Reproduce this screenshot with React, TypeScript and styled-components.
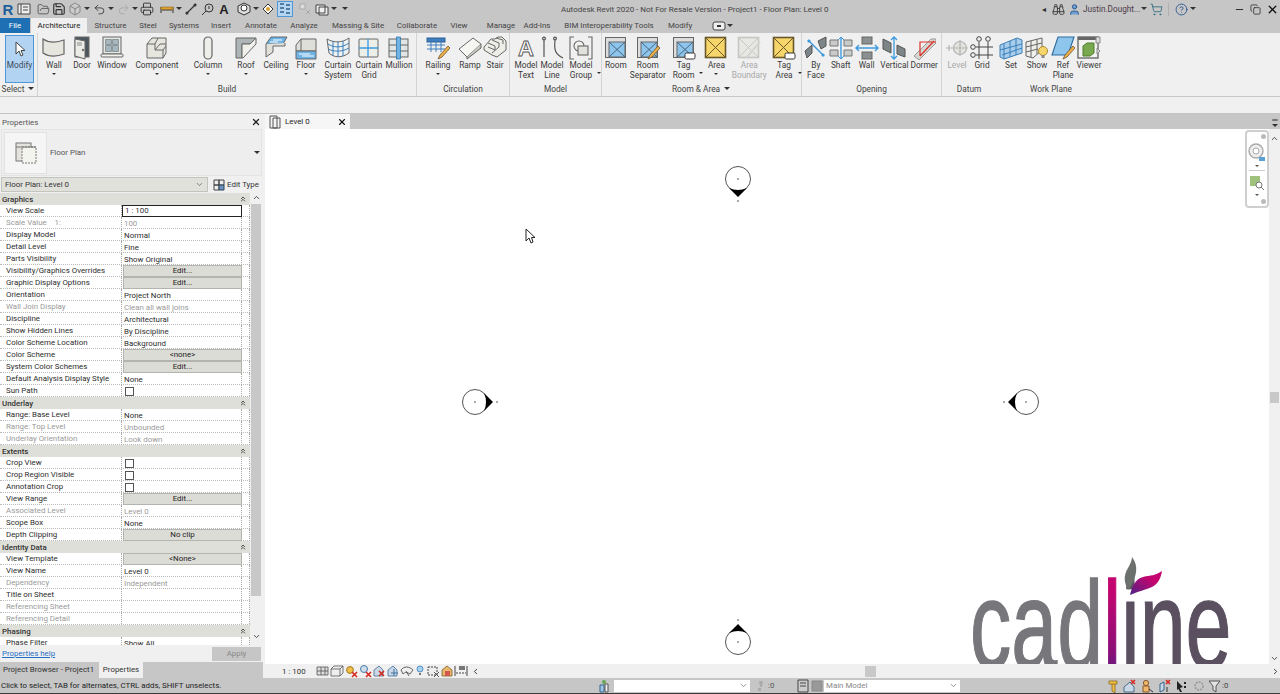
import { ReactNode } from 'react';
import { styled, createGlobalStyle } from 'styled-components';
import {
  Binoculars,
  ChevronLeft,
  ChevronRight,
  ChevronUp,
  ChevronDown,
  ChevronsUp,
  CircleHelp,
  Copy,
  FolderOpen,
  Minus,
  Printer,
  Redo2,
  Save,
  ShoppingCart,
  Undo2,
  User,
  X,
} from 'lucide-react';

const GlobalStyle = createGlobalStyle`
  html, body {
    margin: 0;
    padding: 0;
    background: #fff;
  }
  * {
    box-sizing: border-box;
  }
`;

const LINE = '#666';
const LIGHT = '#e6e6df';
const BLUE = '#6db3e6';
const YELLOW = '#f6d56b';

const Pencil = () => (
  <g>
    <path d="M22 10L14 19L12 23L16 21L24 12Z" fill="#f0b04a" stroke="#6a5430" strokeWidth=".8" />
  </g>
);

const Tag = () => <rect x="13" y="17" width="10" height="6" rx="1.5" fill="#fff" stroke="#333" />;

const RoomBase = () => (
  <g stroke={LINE}>
    <rect x="1.5" y="1.5" width="20" height="20" fill="#ddd" />
    <rect x="5" y="6" width="16" height="15" fill="#8ec5ec" />
    <path d="M5 6L21 21M21 6L5 21" fill="none" stroke="#45657d" />
  </g>
);

const AreaBase = ({ fill = YELLOW, stroke = '#6a5a2a' }: { fill?: string; stroke?: string }) => (
  <g>
    <rect x="1.5" y="1.5" width="20" height="20" fill={fill} stroke={stroke} strokeWidth="1.6" />
    <path d="M2 2L21 21M21 2L2 21" fill="none" stroke={stroke} />
  </g>
);

const icons: Record<string, ReactNode> = {
  wall: <path d="M1 3C7 7 14 7 22 4V18C14 21 7 21 1 17Z" fill={LIGHT} stroke={LINE} strokeWidth="1.2" />,
  door: (
    <g stroke={LINE}>
      <rect x="5" y="1" width="14" height="20" fill="#4c565c" />
      <path d="M5 3L15 5V23L5 20Z" fill="#ecece6" />
      <rect x="7" y="6" width="5" height="4" fill="#bbb" stroke="none" />
      <circle cx="13" cy="14" r=".8" fill="#333" />
    </g>
  ),
  window: (
    <g stroke={LINE}>
      <rect x="3" y="1" width="18" height="17" fill="#e8e8e2" />
      <path d="M5.5 3.5h6v5h-6zM12.5 3.5h6v5h-6zM5.5 9.5h6v6h-6zM12.5 9.5h6v6h-6z" fill="#a7b6bd" stroke="#8a969b" />
      <rect x="1" y="18" width="22" height="3" rx="1" fill="#f2f2ee" />
    </g>
  ),
  component: (
    <g fill={LIGHT} stroke={LINE}>
      <path d="M2 8L7 2H21V17L18 22H2Z" />
      <path d="M2 8H10V14H18V22M10 8L13 2M10 14L15 8H21M18 14L21 10" fill="none" />
    </g>
  ),
  column: <rect x="8" y="1" width="8" height="22" rx="4" fill="#eeeee8" stroke={LINE} strokeWidth="1.2" />,
  roof: (
    <g stroke={LINE}>
      <path d="M2 2H22L16 8H8V22H2Z" fill="#aeb5b7" />
      <path d="M8 8H16L22 2V8L9 22H8Z" fill="#f0f0ea" />
    </g>
  ),
  ceiling: (
    <g stroke={LINE}>
      <path d="M7 1H23L19 8H2Z" fill={BLUE} />
      <path d="M2 8V21L9 16V10H21V7" fill="#e0e0d8" />
      <path d="M9 4H18M6 6H14" stroke="#fff" />
    </g>
  ),
  floor: (
    <g stroke={LINE}>
      <path d="M7 3H22V15H2V9Z" fill="#dedfd8" />
      <path d="M7 3V15" fill="none" />
      <path d="M2 15H22V23H2Z" fill={BLUE} />
      <path d="M5 18H16M8 20H20" stroke="#fff" />
    </g>
  ),
  curtainSystem: (
    <g fill="#eef1f2" stroke="#3a7fb8">
      <path d="M1 3C8 7 16 7 23 2V17C16 22 8 22 3 17Z" stroke={LINE} />
      <path d="M7 5V20M12 6V21M17 5V20M2 8C8 12 16 12 23 7M2 13C8 16 16 16 23 12" fill="none" />
    </g>
  ),
  curtainGrid: (
    <g>
      <rect x="2" y="3" width="19" height="18" rx="1" fill="#eceee8" stroke={LINE} />
      <path d="M11 3V21M2 12H21" stroke="#3d9ae0" strokeWidth="1.3" />
    </g>
  ),
  mullion: (
    <g>
      <rect x="2" y="3" width="19" height="18" fill="#dfe4e4" stroke={LINE} />
      <path d="M2 9H21M2 15H21" stroke={LINE} />
      <rect x="9.5" y="1" width="4" height="22" fill={BLUE} stroke="#2a6f9f" strokeWidth=".7" />
    </g>
  ),
  railing: (
    <g>
      <rect x="1" y="2" width="18" height="4" fill="#3f7fc0" stroke="#2d5f94" />
      <path d="M1 9H19M1 13H19M5 6V16M10 6V16M15 6V16" stroke="#3f7fc0" />
      <Pencil />
    </g>
  ),
  ramp: (
    <g stroke={LINE}>
      <path d="M1 13L15 2L23 8L9 21Z" fill="#f6f6f2" />
      <path d="M23 8L23 12L9 23V21" fill="#c7c7c0" />
    </g>
  ),
  stair: (
    <g stroke={LINE} fill="#eeeee8">
      <path d="M1 11L8 3H12L15 1H19L23 5V14L14 21L9 19L1 14Z" />
      <path d="M5 7L12 10M9 4L16 7M13 2L20 4M12 10V14M16 7V11M20 4V8M12 14L5 11M16 11L9 17" fill="none" />
    </g>
  ),
  modelText: (
    <text x="12" y="20" textAnchor="middle" fontFamily="'Liberation Sans', sans-serif" fontSize="22" fontWeight="700" fill="#fff" stroke="#555" strokeWidth=".9">
      A
    </text>
  ),
  modelLine: (
    <g fill="none" stroke="#555" strokeWidth="1.2">
      <path d="M4 4V21M15 4C14 14 15 18 23 22" />
      <circle cx="4" cy="2.5" r="1.4" />
      <circle cx="15" cy="2.5" r="1.4" />
    </g>
  ),
  modelGroup: (
    <g fill="none" stroke="#666" strokeWidth="1.1">
      <path d="M5 1H1V23H5M19 1H23V23H19" />
      <circle cx="10" cy="10" r="5" fill="#f2f2f2" />
      <rect x="9" y="10" width="10" height="9" fill="#e2e2dc" />
    </g>
  ),
  room: <RoomBase />,
  roomSeparator: (
    <g>
      <RoomBase />
      <Pencil />
    </g>
  ),
  tagRoom: (
    <g>
      <RoomBase />
      <Tag />
    </g>
  ),
  area: <AreaBase />,
  areaBoundary: (
    <g opacity=".75">
      <AreaBase fill="#e4e4e0" stroke="#b8b8b4" />
      <path d="M10 21L23 6" stroke="#ccc" strokeWidth="2" />
    </g>
  ),
  tagArea: (
    <g>
      <AreaBase />
      <Tag />
    </g>
  ),
  byFace: (
    <g>
      <path d="M1 15L8 9V17L3 22ZM14 5L22 1V10L17 13Z" fill="#7c8688" stroke="#555" />
      <path d="M4 4L20 20" stroke="#3d9ae0" strokeWidth="1.4" />
      <circle cx="5" cy="5" r="1.6" fill="#3d9ae0" />
      <circle cx="19" cy="19" r="1.6" fill="#3d9ae0" />
    </g>
  ),
  shaft: (
    <g>
      <path d="M1 4h8v6H1zM15 4h8v6h-8zM1 14h8v6H1zM15 14h8v6h-8z" fill="#c9cbca" stroke="#777" />
      <path d="M12 1V23" stroke="#3d9ae0" strokeWidth="1.4" />
      <path d="M9 4L12 1L15 4M9 20L12 23L15 20" fill="none" stroke="#3d9ae0" />
    </g>
  ),
  wallOpening: (
    <g>
      <rect x="7" y="1" width="10" height="7" fill="#8c9090" stroke="#666" />
      <rect x="7" y="16" width="10" height="7" fill="#8c9090" stroke="#666" />
      <path d="M1 12H23M4 9L1 12L4 15M20 9L23 12L20 15" fill="none" stroke="#3d9ae0" strokeWidth="1.4" />
    </g>
  ),
  verticalOpening: (
    <g>
      <path d="M1 3L9 7V17L1 13ZM15 9L23 13V21L15 18Z" fill="#7c8688" stroke="#555" />
      <path d="M12 1V23M9 4L12 1L15 4M9 20L12 23L15 20" fill="none" stroke="#3d9ae0" strokeWidth="1.3" />
    </g>
  ),
  dormer: (
    <g>
      <path d="M2 20L19 3H24V7L7 24Z" fill="#d7d7d2" stroke="#999" />
      <path d="M8 20L8 6H24M8 20L22 5" fill="none" stroke="#d8322a" strokeWidth="1.2" />
    </g>
  ),
  level: (
    <g fill="none" stroke="#b5b5b2" strokeWidth="1.2">
      <path d="M1 12H7M4 9V15" />
      <circle cx="15" cy="12" r="6.5" fill="#e2e2de" />
      <path d="M15 4V20M7 12H23" />
    </g>
  ),
  grid: (
    <g fill="none" stroke="#444">
      <circle cx="9" cy="3" r="2.3" />
      <circle cx="18" cy="3" r="2.3" />
      <circle cx="3" cy="11" r="2.3" />
      <circle cx="3" cy="19" r="2.3" />
      <path d="M9 6V23M18 6V23M6 11H23M6 19H23" />
    </g>
  ),
  workSet: (
    <g stroke="#3a7fb8" fill="#a6cdec">
      <path d="M1 9L18 2L23 4V17L5 23L1 21Z" />
      <path d="M5 8V23M11 5V21M17 3V19M1 14L23 8M3 19L23 12" fill="none" />
    </g>
  ),
  workShow: (
    <g>
      <path d="M1 6L17 2V14L8 22L1 20Z" fill="#eeeeea" stroke="#666" />
      <path d="M6 5V21M12 3V18M1 11L17 7M1 16L13 13" fill="none" stroke="#666" />
      <circle cx="18" cy="15" r="4.5" fill="#f6d56b" stroke="#a98a2c" />
      <rect x="16.5" y="19" width="3" height="3" fill="#888" />
    </g>
  ),
  refPlane: (
    <g>
      <path d="M7 1H23L17 19H1Z" fill="#8ec5ec" stroke="#2d6a9c" strokeWidth="1.1" />
      <Pencil />
    </g>
  ),
  viewer: (
    <g>
      <rect x="1" y="1" width="20" height="21" fill="#f2f2f0" stroke="#555" strokeWidth="1.2" />
      <rect x="1" y="1" width="20" height="3" fill="#666" />
      <path d="M6 10L10 7H17V17L13 20H6Z" fill="#78a94f" stroke="#4f7d30" />
      <path d="M19 1h4v6h-4zM20 12l3 3-3 3z" fill="#ddd" stroke="#888" />
    </g>
  ),
};

type ToolData = { icon: string; lines: string[]; w: number; caret?: 'below' | 'side'; off?: boolean };
type PanelData = { title: string; w: number; divider?: boolean; menu?: boolean; tools: ToolData[] };

const panels: PanelData[] = [
  {
    title: 'Build',
    w: 379,
    divider: true,
    tools: [
      { icon: 'wall', lines: ['Wall'], w: 32, caret: 'below' },
      { icon: 'door', lines: ['Door'], w: 24 },
      { icon: 'window', lines: ['Window'], w: 36 },
      { icon: 'component', lines: ['Component'], w: 54, caret: 'below' },
      { icon: 'column', lines: ['Column'], w: 48, caret: 'below' },
      { icon: 'roof', lines: ['Roof'], w: 28, caret: 'below' },
      { icon: 'ceiling', lines: ['Ceiling'], w: 32 },
      { icon: 'floor', lines: ['Floor'], w: 28, caret: 'below' },
      { icon: 'curtainSystem', lines: ['Curtain', 'System'], w: 36 },
      { icon: 'curtainGrid', lines: ['Curtain', 'Grid'], w: 26 },
      { icon: 'mullion', lines: ['Mullion'], w: 34 },
    ],
  },
  {
    title: 'Circulation',
    w: 93,
    divider: true,
    tools: [
      { icon: 'railing', lines: ['Railing'], w: 42, caret: 'below' },
      { icon: 'ramp', lines: ['Ramp'], w: 22 },
      { icon: 'stair', lines: ['Stair'], w: 28 },
    ],
  },
  {
    title: 'Model',
    w: 92,
    divider: true,
    tools: [
      { icon: 'modelText', lines: ['Model', 'Text'], w: 32 },
      { icon: 'modelLine', lines: ['Model', 'Line'], w: 20 },
      { icon: 'modelGroup', lines: ['Model', 'Group'], w: 38, caret: 'side' },
    ],
  },
  {
    title: 'Room & Area',
    w: 200,
    divider: true,
    menu: true,
    tools: [
      { icon: 'room', lines: ['Room'], w: 28 },
      { icon: 'roomSeparator', lines: ['Room', 'Separator'], w: 36 },
      { icon: 'tagRoom', lines: ['Tag', 'Room'], w: 36, caret: 'side' },
      { icon: 'area', lines: ['Area'], w: 30, caret: 'below' },
      { icon: 'areaBoundary', lines: ['Area', 'Boundary'], w: 36, off: true },
      { icon: 'tagArea', lines: ['Tag', 'Area'], w: 34, caret: 'side' },
    ],
  },
  {
    title: 'Opening',
    w: 140,
    divider: true,
    tools: [
      { icon: 'byFace', lines: ['By', 'Face'], w: 28 },
      { icon: 'shaft', lines: ['Shaft'], w: 22 },
      { icon: 'wallOpening', lines: ['Wall'], w: 30 },
      { icon: 'verticalOpening', lines: ['Vertical'], w: 26 },
      { icon: 'dormer', lines: ['Dormer'], w: 34 },
    ],
  },
  {
    title: 'Datum',
    w: 54,
    tools: [
      { icon: 'level', lines: ['Level'], w: 30, off: true },
      { icon: 'grid', lines: ['Grid'], w: 20 },
    ],
  },
  {
    title: 'Work Plane',
    w: 110,
    tools: [
      { icon: 'workSet', lines: ['Set'], w: 30 },
      { icon: 'workShow', lines: ['Show'], w: 22 },
      { icon: 'refPlane', lines: ['Ref', 'Plane'], w: 30 },
      { icon: 'viewer', lines: ['Viewer'], w: 22 },
    ],
  },
];

const tabs = [
  { label: 'Structure', w: 47 },
  { label: 'Steel', w: 28 },
  { label: 'Systems', w: 44 },
  { label: 'Insert', w: 30 },
  { label: 'Annotate', w: 50 },
  { label: 'Analyze', w: 36 },
  { label: 'Massing & Site', w: 72 },
  { label: 'Collaborate', w: 46 },
  { label: 'View', w: 38 },
  { label: 'Manage', w: 46 },
  { label: 'Add-Ins', w: 26 },
  { label: 'BIM Interoperability Tools', w: 118 },
  { label: 'Modify', w: 24 },
];

type Row =
  | { head: string }
  | { name: string; value?: string; kind?: 'input' | 'button' | 'check'; off?: boolean };

const rows: Row[] = [
  { head: 'Graphics' },
  { name: 'View Scale', value: '1 : 100', kind: 'input' },
  { name: 'Scale Value    1:', value: '100', off: true },
  { name: 'Display Model', value: 'Normal' },
  { name: 'Detail Level', value: 'Fine' },
  { name: 'Parts Visibility', value: 'Show Original' },
  { name: 'Visibility/Graphics Overrides', value: 'Edit...', kind: 'button' },
  { name: 'Graphic Display Options', value: 'Edit...', kind: 'button' },
  { name: 'Orientation', value: 'Project North' },
  { name: 'Wall Join Display', value: 'Clean all wall joins', off: true },
  { name: 'Discipline', value: 'Architectural' },
  { name: 'Show Hidden Lines', value: 'By Discipline' },
  { name: 'Color Scheme Location', value: 'Background' },
  { name: 'Color Scheme', value: '<none>', kind: 'button' },
  { name: 'System Color Schemes', value: 'Edit...', kind: 'button' },
  { name: 'Default Analysis Display Style', value: 'None' },
  { name: 'Sun Path', kind: 'check' },
  { head: 'Underlay' },
  { name: 'Range: Base Level', value: 'None' },
  { name: 'Range: Top Level', value: 'Unbounded', off: true },
  { name: 'Underlay Orientation', value: 'Look down', off: true },
  { head: 'Extents' },
  { name: 'Crop View', kind: 'check' },
  { name: 'Crop Region Visible', kind: 'check' },
  { name: 'Annotation Crop', kind: 'check' },
  { name: 'View Range', value: 'Edit...', kind: 'button' },
  { name: 'Associated Level', value: 'Level 0', off: true },
  { name: 'Scope Box', value: 'None' },
  { name: 'Depth Clipping', value: 'No clip', kind: 'button' },
  { head: 'Identity Data' },
  { name: 'View Template', value: '<None>', kind: 'button' },
  { name: 'View Name', value: 'Level 0' },
  { name: 'Dependency', value: 'Independent', off: true },
  { name: 'Title on Sheet' },
  { name: 'Referencing Sheet', off: true },
  { name: 'Referencing Detail', off: true },
  { head: 'Phasing' },
  { name: 'Phase Filter', value: 'Show All' },
];

const markers = [
  { x: 451, y: 378, turn: 0 },
  { x: 1002, y: 378, turn: 180 },
  { x: 714, y: 155, turn: 90 },
  { x: 714, y: 618, turn: -90 },
];

const Small = ({ children, w = 14 }: { children: ReactNode; w?: number }) => (
  <svg width={w} height="14" viewBox={`0 0 ${w} 14`}>
    {children}
  </svg>
);

const viewBarIcons: { w: number; node: ReactNode }[] = [
  { w: 14, node: <path d="M1 3h11v8H1zM1 7h11M5 3v8M9 3v8" fill="#ddd" stroke="#555" strokeWidth=".8" /> },
  { w: 14, node: <path d="M1 5L4 2H13V9L10 12H1ZM1 5H10V12M10 5L13 2" fill="#eee" stroke="#555" strokeWidth=".8" /> },
  { w: 14, node: <g><circle cx="6" cy="6" r="3.4" fill="#f3c14b" stroke="#a5741d" /><path d="M8 8L13 13M13 8L8 13" stroke="#d3261d" strokeWidth="1.6" /></g> },
  { w: 14, node: <g><circle cx="6" cy="5" r="3.5" fill="#cde" stroke="#4a7da8" /><path d="M8 8L13 13M13 8L8 13" stroke="#d3261d" strokeWidth="1.6" /></g> },
  { w: 14, node: <g><path d="M2 6L7 2L11 6V12H2Z" fill="#c8d8e6" stroke="#4a6a88" strokeWidth=".8" /><path d="M7 7L12 12M12 7L7 12" stroke="#d3261d" strokeWidth="1.5" /></g> },
  { w: 14, node: <g><path d="M2 6L7 2L11 6V12H2Z" fill="#c8d8e6" stroke="#3d6f9e" strokeWidth=".8" /><path d="M8 5V12M5 9H12" stroke="#3d6f9e" /></g> },
  { w: 14, node: <path d="M1 6C4 2 9 2 13 6L10 10C7 8 5 8 3 10ZM6 7L9 12" fill="none" stroke="#555" strokeWidth=".9" /> },
  { w: 12, node: <g><circle cx="6" cy="5" r="3" fill="#a5d2f0" stroke="#3d7fb5" strokeWidth=".8" /><path d="M5 9h2v2H5z" fill="#777" /></g> },
  { w: 14, node: <g><path d="M2 3h9v8H2z" fill="#eee" stroke="#444" strokeDasharray="2 1" /><path d="M8 8L13 13M13 8L8 13" stroke="#555" /></g> },
  { w: 14, node: <g><path d="M2 6L7 2L12 6V12H2Z" fill="#e9b86d" stroke="#7a5a26" strokeWidth=".8" /><path d="M5 7h5v5H5z" fill="#d3584b" /></g> },
  { w: 14, node: <g><path d="M1 2V12M13 2V12" stroke="#444" /><rect x="5" y="2" width="6" height="4" fill="#777" /><path d="M2 9H12" stroke="#444" strokeDasharray="2 1" /></g> },
];

const filterIcons: { w: number; node: ReactNode }[] = [
  { w: 16, node: <g><path d="M3 2h8v3H3zM6 5v7l3 2V5" fill="#f0bd48" stroke="#8a6a1d" strokeWidth=".8" /></g> },
  { w: 18, node: <g><path d="M2 8L8 3L12 8V13H2Z" fill="#c8d8e6" stroke="#4a6a88" /><path d="M9 1L13 5M13 1L9 5" stroke="#d3261d" strokeWidth="1.5" /></g> },
  { w: 18, node: <g><circle cx="6" cy="4" r="2.6" fill="#f0b770" stroke="#8a5a26" /><path d="M3 7h6v6H3z" fill="#f0b770" stroke="#8a5a26" /><path d="M9 10l4 3" stroke="#333" /></g> },
  { w: 16, node: <g><path d="M2 13V5L6 3V11Z" fill="#c8d8e6" stroke="#36648c" /><path d="M8 1L12 5M12 1L8 5" stroke="#d3261d" strokeWidth="1.5" /><path d="M9 8V13" stroke="#333" /></g> },
  { w: 18, node: <path d="M3 2L9 8L6 9L8 13L6 13L4.5 10L3 11ZM10 3h2v2h-2zM10 7h2v2h-2z" fill="#222" /> },
  { w: 16, node: <circle cx="7" cy="7" r="4" fill="none" stroke="#999" strokeWidth="1.6" strokeDasharray="2 1" /> },
  { w: 14, node: <path d="M1 2H12L8 7V13L5 11V7Z" fill="#e4e4e4" stroke="#555" /> },
];

export default function App() {
  return (
    <Page>
      <GlobalStyle />
      <TitleBar>
        <QuickAccess>
          <Brand>R</Brand>
          <QuickIcon>
            <Small><path d="M1 2h12v10H1zM4 2v10M6 5h5M6 8h5" fill="#eee" stroke="#444" /></Small>
          </QuickIcon>
          <QuickGap $w={3} />
          <QuickIcon><FolderOpen size={13} strokeWidth={1.4} color="#444" /></QuickIcon>
          <QuickIcon><Save size={14} strokeWidth={2} color="#333" /></QuickIcon>
          <QuickIcon>
            <Small><path d="M2 4L7 1L12 4V10L7 13L2 10ZM2 4L7 7L12 4M7 7V13" fill="#ccc" stroke="#888" /></Small>
          </QuickIcon>
          <Caret />
          <QuickIcon><Undo2 size={13} strokeWidth={1.5} color="#333" /></QuickIcon>
          <Caret />
          <QuickIcon><Redo2 size={13} strokeWidth={1.5} color="#a5a5a5" /></QuickIcon>
          <Caret />
          <QuickIcon><Printer size={14} strokeWidth={1.6} color="#333" /></QuickIcon>
          <QuickGap $w={4} />
          <QuickIcon>
            <Small><path d="M1 5V11M13 5V11M2 8H12" stroke="#333" /><rect x="1" y="5" width="12" height="2.5" fill="#e0a030" stroke="#8a6a1d" strokeWidth=".6" /></Small>
          </QuickIcon>
          <Caret />
          <QuickIcon>
            <Small><path d="M2 12L12 2" stroke="#333" strokeWidth="1.2" /><circle cx="3" cy="11" r="1.5" fill="#333" /><circle cx="11" cy="3" r="1.5" fill="#333" /></Small>
          </QuickIcon>
          <QuickGap $w={1} />
          <QuickIcon>
            <Small><circle cx="8" cy="6" r="4" fill="none" stroke="#333" /><path d="M5 9L1 13" stroke="#333" /><path d="M8 4v3" stroke="#333" /></Small>
          </QuickIcon>
          <QuickIcon>
            <BigLetter>A</BigLetter>
          </QuickIcon>
          <QuickGap $w={4} />
          <QuickIcon>
            <Small><path d="M7 1L13 4V10L7 13L1 10V4Z" fill="#ddd" stroke="#333" /><circle cx="7" cy="6" r="3" fill="#fff" stroke="#333" /></Small>
          </QuickIcon>
          <Caret />
          <QuickIcon>
            <Small><path d="M7 2L12 7L7 12L2 7Z" fill="#fff" stroke="#333" /><circle cx="7" cy="7" r="2" fill="#d9a02f" /></Small>
          </QuickIcon>
          <QuickGap $w={1} />
          <ActiveQuickIcon>
            <Small><path d="M2 2h4M2 6h4M2 10h4M8 3h4M8 7h4M8 11h4" stroke="#2e5f90" strokeWidth="1.4" /></Small>
          </ActiveQuickIcon>
          <QuickGap $w={4} />
          <QuickIcon>
            <Small><path d="M2 2h5v5H2z" fill="#ddd" stroke="#aaa" /><path d="M8 8L12 12M12 8L8 12" stroke="#aaa" /></Small>
          </QuickIcon>
          <QuickGap $w={1} />
          <QuickIcon>
            <Small><path d="M1 3h9v8H1zM4 5h9v8H4z" fill="#eee" stroke="#444" /></Small>
          </QuickIcon>
          <Caret />
          <QuickGap $w={3} />
          <Caret />
        </QuickAccess>
        <WindowTitle>Autodesk Revit 2020 - Not For Resale Version - Project1 - Floor Plan: Level 0</WindowTitle>
        <TitleRight>
          <SmallArrow>◂</SmallArrow>
          <TitleSlot><Binoculars size={13} color="#333" strokeWidth={1.6} /></TitleSlot>
          <TitleSlot><User size={13} color="#1d4f8c" fill="#6f9fd0" strokeWidth={1.6} /></TitleSlot>
          <UserName>Justin.Dought...</UserName>
          <Caret />
          <TitleSlot><ShoppingCart size={13} color="#2e6b80" strokeWidth={1.6} /></TitleSlot>
          <HelpDivider />
          <TitleSlot><CircleHelp size={13} color="#1d4f8c" strokeWidth={1.6} /></TitleSlot>
          <Caret />
          <WindowControls>
            <Minus size={11} color="#222" strokeWidth={2} />
            <Copy size={11} color="#222" strokeWidth={1.6} />
            <X size={13} color="#111" strokeWidth={2.4} />
          </WindowControls>
        </TitleRight>
      </TitleBar>

      <TabStrip>
        <FileTab>File</FileTab>
        <ActiveTab>Architecture</ActiveTab>
        {tabs.map((tab) => (
          <RibbonTab key={tab.label} $w={tab.w}>
            {tab.label}
          </RibbonTab>
        ))}
        <TabExtra>
          <Small><rect x="1" y="3" width="12" height="8" rx="2" fill="#eee" stroke="#444" /><rect x="5" y="6" width="4" height="2" fill="#333" /></Small>
          <Caret />
        </TabExtra>
      </TabStrip>

      <Ribbon>
        <SelectPanel>
          <ModifyButton>
            <svg width="12" height="16" viewBox="0 0 12 16">
              <path d="M2 1V13L5 10L7 15L9 14L7 9.5H11Z" fill="#fff" stroke="#444" />
            </svg>
            <span>Modify</span>
          </ModifyButton>
          <PanelTitle>
            Select <Caret />
          </PanelTitle>
        </SelectPanel>
        {panels.map((panel) => (
          <RibbonPanel key={panel.title} $w={panel.w} $divider={panel.divider}>
            <ToolRow>
              {panel.tools.map((tool) => (
                <Tool key={tool.lines.join(' ')} $w={tool.w} $off={tool.off}>
                  <ToolIcon viewBox="0 0 24 24">{icons[tool.icon]}</ToolIcon>
                  {tool.lines.map((line) => (
                    <ToolLine key={line}>{line}</ToolLine>
                  ))}
                  {tool.caret === 'below' && <BelowCaret />}
                  {tool.caret === 'side' && <SideCaret />}
                </Tool>
              ))}
            </ToolRow>
            <PanelTitle>
              {panel.title} {panel.menu && <Caret />}
            </PanelTitle>
          </RibbonPanel>
        ))}
      </Ribbon>
      <OptionsBand />

      <Workspace>
        <PropertiesPanel>
          <PanelHeader>
            Properties
            <X size={10} color="#222" strokeWidth={3} />
          </PanelHeader>
          <TypeBox>
            <TypePreview>
              <svg width="24" height="24" viewBox="0 0 24 24">
                <rect x="2" y="2" width="15" height="18" fill="#e4e4dc" stroke="#777" />
                <rect x="8" y="6" width="14" height="16" fill="#f4f4ee" stroke="#777" strokeDasharray="2 1" />
                <path d="M2 6H22" stroke="#777" />
              </svg>
            </TypePreview>
            <TypeName>Floor Plan</TypeName>
            <Caret />
          </TypeBox>
          <InstanceRow>
            <InstanceSelect>
              Floor Plan: Level 0
              <ChevronDown size={9} color="#666" />
            </InstanceSelect>
            <EditType>
              <Small><path d="M2 2h5v5H2zM7 2h5v5H7zM2 7h5v5H2z" fill="#eee" stroke="#444" /><path d="M7 7h5v5H7z" fill="#6a93c0" stroke="#345" /></Small>
              Edit Type
            </EditType>
          </InstanceRow>
          <TableArea>
            <PropTable>
              {rows.map((row) =>
                'head' in row ? (
                  <GroupRow key={row.head}>
                    {row.head}
                    <ChevronsUp size={8} color="#333" strokeWidth={2.5} />
                  </GroupRow>
                ) : (
                  <PropRow key={row.name}>
                    <PropName $off={row.off}>{row.name}</PropName>
                    {row.kind === 'button' ? (
                      <ValueButton>{row.value}</ValueButton>
                    ) : row.kind === 'input' ? (
                      <ValueInput>{row.value}</ValueInput>
                    ) : row.kind === 'check' ? (
                      <PropValue>
                        <CheckBox />
                      </PropValue>
                    ) : (
                      <PropValue $off={row.off}>{row.value}</PropValue>
                    )}
                    <RowEnd />
                  </PropRow>
                ),
              )}
            </PropTable>
            <TableScroll>
              <ChevronUp size={9} color="#444" strokeWidth={2.5} />
              <TableThumb />
              <ChevronDown size={9} color="#444" strokeWidth={2.5} />
            </TableScroll>
          </TableArea>
          <PanelFooter>
            <HelpLink>Properties help</HelpLink>
            <ApplyButton>Apply</ApplyButton>
          </PanelFooter>
          <BrowserTabs>
            <BrowserTab>Project Browser - Project1</BrowserTab>
            <BrowserTabActive>Properties</BrowserTabActive>
          </BrowserTabs>
        </PropertiesPanel>

        <ViewColumn>
          <DocTabs>
            <DocTab>
              <Small><path d="M2 1h7v12H2zM5 3h7v10H5z" fill="#f4f4f4" stroke="#555" /></Small>
              <DocTabName>Level 0</DocTabName>
              <X size={10} color="#111" strokeWidth={2.6} />
            </DocTab>
            <DocMenu>
              <Minus size={8} color="#222" strokeWidth={3} />
              <Caret />
            </DocMenu>
          </DocTabs>
          <CanvasRow>
            <Canvas>
              {markers.map((marker) => (
                <Marker key={marker.turn} $x={marker.x - 265} $y={marker.y - 129} viewBox="0 0 48 48">
                  <g transform={`rotate(${marker.turn} 24 24)`}>
                    <circle cx="24" cy="24" r="12.5" fill="#fff" stroke="#555" />
                    <path d="M33 15L42 24L33 33Q37 24 33 15Z" fill="#000" />
                    <path d="M23 24H25M45 24H47" stroke="#555" />
                  </g>
                </Marker>
              ))}
              <Pointer viewBox="0 0 11 16">
                <path d="M1 1V13L4 10L6 15L8 14L6.5 9.5H10Z" fill="#fff" stroke="#222" />
              </Pointer>
              <NavBar>
                <NavDot />
                <svg width="18" height="20" viewBox="0 0 18 20">
                  <circle cx="8" cy="9" r="7" fill="#eee" stroke="#aaa" strokeWidth="1.4" />
                  <circle cx="8" cy="9" r="3" fill="#fff" stroke="#aaa" />
                  <path d="M11 15h6v4h-6z" fill="#5aa0d0" />
                </svg>
                <NavCaret />
                <NavRule />
                <svg width="16" height="16" viewBox="0 0 16 16">
                  <rect x="1" y="1" width="10" height="10" fill="#9ec27c" />
                  <circle cx="10" cy="10" r="3" fill="#fff" stroke="#777" />
                  <path d="M12 12L15 15" stroke="#777" />
                </svg>
                <NavCaret />
                <NavDot />
              </NavBar>
              <Logo>
                <LogoText>
                  cad<LogoAccent>l</LogoAccent>
                  <LogoDark>ine</LogoDark>
                </LogoText>
                <Flame viewBox="0 0 50 45">
                  <defs>
                    <linearGradient id="flameColor" x1="1" y1="0" x2="0" y2="1">
                      <stop offset="0.35" stopColor="#c4056f" />
                      <stop offset="1" stopColor="#4d2385" />
                    </linearGradient>
                  </defs>
                  <path d="M17 3C24 12 22 22 14 36C9 30 8 22 13 14C15 10 17 7 17 3Z" fill="#6d716e" />
                  <path d="M47 17C40 22 36 21 28 23C20 25 17 33 15 41C24 37 30 36 37 33C43 30 46 24 47 17Z" fill="url(#flameColor)" />
                </Flame>
              </Logo>
            </Canvas>
            <CanvasScroll>
              <ChevronUp size={9} color="#444" strokeWidth={2.5} />
              <CanvasThumb />
              <ChevronDown size={9} color="#444" strokeWidth={2.5} />
            </CanvasScroll>
          </CanvasRow>
          <ViewBar>
            <ScaleLabel>1 : 100</ScaleLabel>
            <ViewIcons>
              {viewBarIcons.map((item, i) => (
                <Small key={i} w={item.w}>{item.node}</Small>
              ))}
            </ViewIcons>
            <ChevronLeft size={9} color="#333" strokeWidth={2.5} />
            <HorizontalTrack>
              <HorizontalThumb />
            </HorizontalTrack>
            <ChevronRight size={9} color="#333" strokeWidth={2.5} />
          </ViewBar>
        </ViewColumn>
      </Workspace>

      <StatusBar>
        <StatusText>Click to select, TAB for alternates, CTRL adds, SHIFT unselects.</StatusText>
        <Small><path d="M3 6h4v7H3z" fill="#9fc6e6" stroke="#36648c" /><path d="M8 5h3v8H8z" fill="#eee" stroke="#555" /><circle cx="7" cy="3" r="2" fill="#64a651" /></Small>
        <StatusSelect $w={136} $gap={3}>
          <ChevronDown size={9} color="#777" />
        </StatusSelect>
        <WorksetCount>
          <Small><path d="M5 2h4l-1 6H6zM4 9h3v3H4z" fill="#aaa" /></Small>
          :0
        </WorksetCount>
        <Small><path d="M2 1h10v12H2zM4 4h6M4 7h6" fill="#ccc" stroke="#444" /></Small>
        <Small><path d="M2 2h10v10H2z" fill="#999" stroke="#888" /></Small>
        <StatusSelect $w={136} $gap={0}>
          <MutedText>Main Model</MutedText>
          <ChevronDown size={9} color="#777" />
        </StatusSelect>
        <FilterIcons>
          {filterIcons.map((item, i) => (
            <Small key={i} w={item.w}>{item.node}</Small>
          ))}
          <FilterCount>:0</FilterCount>
        </FilterIcons>
      </StatusBar>
    </Page>
  );
}

const Page = styled.div`
  width: 1280px;
  height: 694px;
  display: flex;
  flex-direction: column;
  overflow: hidden;
  background: #c6c6c6;
  color: #2c2c2c;
  font-family: Roboto, 'Liberation Sans', sans-serif;
  font-size: 7.9px;
`;

const TitleBar = styled.div`
  height: 18px;
  flex: none;
  display: flex;
  align-items: center;
`;

const QuickAccess = styled.div`
  width: 561px;
  flex: none;
  display: flex;
  align-items: center;
`;

const Brand = styled.div`
  width: 16px;
  text-align: center;
  font: 700 15px 'Liberation Sans', sans-serif;
  color: #1f5e99;
`;

const QuickIcon = styled.div`
  width: 16px;
  height: 16px;
  display: flex;
  align-items: center;
  justify-content: center;
`;

const ActiveQuickIcon = styled(QuickIcon)`
  background: #b7d4ee;
  border: 1px solid #4f97d6;
`;

const QuickGap = styled.div<{ $w: number }>`
  width: ${(p) => p.$w}px;
`;

const BigLetter = styled.span`
  font: 700 13px 'Liberation Sans', sans-serif;
  color: #222;
`;

const Caret = styled.span`
  display: inline-block;
  width: 8px;
  height: 4px;
  flex: none;
  position: relative;
  &::after {
    content: '';
    position: absolute;
    left: 1px;
    top: 0;
    border: 3px solid transparent;
    border-bottom: 0;
    border-top-color: #333;
  }
`;

const WindowTitle = styled.div`
  width: 480px;
  flex: none;
  font-size: 8px;
  color: #444;
  white-space: nowrap;
`;

const TitleRight = styled.div`
  width: 239px;
  flex: none;
  padding-left: 1px;
  display: flex;
  align-items: center;
`;

const SmallArrow = styled.span`
  font-size: 8px;
  width: 8px;
`;

const TitleSlot = styled.div`
  width: 16px;
  display: flex;
  justify-content: center;
`;

const UserName = styled.span`
  width: 57px;
  margin-left: 1px;
  font-size: 8.2px;
  color: #4a3a48;
  white-space: nowrap;
`;

const HelpDivider = styled.span`
  width: 1px;
  height: 13px;
  margin: 0 4px;
  background: #b0b0b0;
`;

const WindowControls = styled.div`
  margin-left: auto;
  width: 45px;
  margin-right: 1px;
  display: flex;
  align-items: center;
  justify-content: space-between;
`;

const TabStrip = styled.div`
  height: 15px;
  flex: none;
  display: flex;
  align-items: stretch;
`;

const FileTab = styled.div`
  width: 30px;
  display: flex;
  align-items: center;
  justify-content: center;
  margin-right: 1px;
  background: #1f6fb5;
  color: #fff;
`;

const ActiveTab = styled.div`
  width: 56px;
  display: flex;
  align-items: center;
  justify-content: center;
  background: #f0f0f0;
  color: #222;
`;

const RibbonTab = styled.div<{ $w: number }>`
  width: ${(p) => p.$w}px;
  display: flex;
  align-items: center;
  justify-content: center;
  white-space: nowrap;
  color: #444;
`;

const TabExtra = styled.div`
  margin-left: 20px;
  display: flex;
  align-items: center;
`;

const Ribbon = styled.div`
  height: 64px;
  flex: none;
  display: flex;
  background: #f0f0f0;
  border-bottom: 1px solid #c8c8c8;
  font-size: 8.3px;
`;

const SelectPanel = styled.div`
  width: 38px;
  display: flex;
  flex-direction: column;
  border-right: 1px solid #d4d4d4;
`;

const ModifyButton = styled.div`
  width: 29px;
  height: 49px;
  margin: 2px 0 0 5px;
  padding-top: 5px;
  display: flex;
  flex-direction: column;
  align-items: center;
  gap: 3px;
  background: #b3d3f2;
  border: 1px solid #4f97d6;
  color: #3b4c5c;
`;

const RibbonPanel = styled.div<{ $w: number; $divider?: boolean }>`
  width: ${(p) => p.$w}px;
  display: flex;
  flex-direction: column;
  border-right: ${(p) => (p.$divider ? '1px solid #d4d4d4' : '0')};
`;

const ToolRow = styled.div`
  height: 51px;
  display: flex;
`;

const Tool = styled.div<{ $w: number; $off?: boolean }>`
  width: ${(p) => p.$w}px;
  padding-top: 3px;
  position: relative;
  display: flex;
  flex-direction: column;
  align-items: center;
  color: ${(p) => (p.$off ? '#a8a8a8' : '#3a3a3a')};
`;

const ToolIcon = styled.svg`
  width: 24px;
  height: 24px;
  flex: none;
`;

const ToolLine = styled.div`
  height: 10px;
  line-height: 10px;
  white-space: nowrap;
`;

const BelowCaret = styled.span`
  margin-top: 3px;
  border: 2px solid transparent;
  border-bottom: 0;
  border-top-color: #333;
`;

const SideCaret = styled.span`
  position: absolute;
  right: -1px;
  top: 39px;
  border: 2px solid transparent;
  border-bottom: 0;
  border-top-color: #333;
`;

const PanelTitle = styled.div`
  height: 12px;
  margin: auto 0 1px;
  display: flex;
  align-items: center;
  justify-content: center;
  gap: 3px;
  color: #444;
  white-space: nowrap;
`;

const OptionsBand = styled.div`
  height: 17px;
  flex: none;
  background: #f0f0f0;
  border-bottom: 1px solid #c4c4c4;
`;

const Workspace = styled.div`
  flex: 1;
  min-height: 0;
  display: flex;
  background: #f0f0f0;
`;

const PropertiesPanel = styled.div`
  width: 263px;
  flex: none;
  display: flex;
  flex-direction: column;
  background: #f0f0f0;
`;

const PanelHeader = styled.div`
  height: 15px;
  padding: 1px 2px 0;
  display: flex;
  align-items: center;
  justify-content: space-between;
  color: #555;
`;

const TypeBox = styled.div`
  height: 47px;
  margin: 0 1px;
  padding: 2px 0 2px 2px;
  display: flex;
  align-items: center;
  gap: 3px;
  border: 1px solid #e4e4e4;
  background: #eeeeee;
`;

const TypePreview = styled.div`
  width: 43px;
  height: 42px;
  display: flex;
  align-items: center;
  justify-content: center;
  background: #f5f5f5;
  border: 1px solid #e2e2e2;
`;

const TypeName = styled.div`
  flex: 1;
  color: #555;
`;

const InstanceRow = styled.div`
  height: 17px;
  display: flex;
  align-items: center;
`;

const InstanceSelect = styled.div`
  width: 207px;
  height: 15px;
  margin-left: 1px;
  padding: 0 3px;
  display: flex;
  align-items: center;
  justify-content: space-between;
  background: #e1e1dc;
  border: 1px solid #c4c4be;
  color: #333;
`;

const EditType = styled.div`
  flex: 1;
  display: flex;
  align-items: center;
  justify-content: center;
  gap: 1px;
  color: #333;
  white-space: nowrap;
`;

const TableArea = styled.div`
  height: 452px;
  display: flex;
  overflow: hidden;
`;

const PropTable = styled.div`
  width: 250px;
  background: #fff;
  overflow: hidden;
`;

const GroupRow = styled.div`
  height: 12px;
  padding: 0 3px 0 2px;
  display: flex;
  align-items: center;
  justify-content: space-between;
  background: #dfdfd9;
  font-weight: 500;
  color: #333;
`;

const PropRow = styled.div`
  height: 12px;
  display: grid;
  grid-template-columns: 122px 120px 8px;
  background: #fff;
  border-bottom: 1px dotted #bbb;
`;

const PropName = styled.div<{ $off?: boolean }>`
  padding-left: 6px;
  line-height: 12px;
  white-space: pre;
  overflow: hidden;
  border-right: 1px dotted #aaa;
  color: ${(p) => (p.$off ? '#9a9a9a' : '#2c2c2c')};
`;

const PropValue = styled.div<{ $off?: boolean }>`
  padding: 1px 0 0 2px;
  line-height: 11px;
  white-space: nowrap;
  display: flex;
  align-items: center;
  border-right: 1px dotted #aaa;
  color: ${(p) => (p.$off ? '#9a9a9a' : '#2c2c2c')};
`;

const ValueButton = styled.div`
  margin-left: 1px;
  text-align: center;
  line-height: 10px;
  background: #dcdcd6;
  border: 1px solid #b4b4ae;
  color: #222;
`;

const ValueInput = styled.div`
  padding-left: 2px;
  line-height: 10px;
  border: 1px solid #222;
  background: #fff;
  color: #333;
`;

const CheckBox = styled.span`
  width: 9px;
  height: 9px;
  margin-left: 1px;
  border: 1px solid #555;
  background: #fff;
`;

const RowEnd = styled.div`
  border-right: 1px dotted #aaa;
`;

const TableScroll = styled.div`
  width: 12px;
  display: flex;
  flex-direction: column;
  align-items: center;
  background: #f0f0f0;
`;

const TableThumb = styled.div`
  width: 10px;
  height: 392px;
  margin: 2px 0 36px;
  background: #c8c8c8;
`;

const PanelFooter = styled.div`
  height: 17px;
  padding: 0 2px;
  display: flex;
  align-items: center;
  justify-content: space-between;
`;

const HelpLink = styled.span`
  color: #1f6fc4;
  text-decoration: underline;
`;

const ApplyButton = styled.div`
  width: 49px;
  height: 14px;
  line-height: 14px;
  text-align: center;
  background: #c6c6c6;
  color: #888;
`;

const BrowserTabs = styled.div`
  flex: 1;
  display: flex;
  background: #c6c6c6;
`;

const BrowserTab = styled.div`
  width: 99px;
  padding-left: 3px;
  line-height: 15px;
  color: #333;
  white-space: nowrap;
`;

const BrowserTabActive = styled.div`
  width: 44px;
  line-height: 15px;
  text-align: center;
  background: #f0f0f0;
  color: #333;
`;

const ViewColumn = styled.div`
  flex: 1;
  min-width: 0;
  margin-left: 2px;
  display: flex;
  flex-direction: column;
`;

const DocTabs = styled.div`
  height: 15px;
  flex: none;
  display: flex;
  justify-content: space-between;
  background: #c6c6c6;
`;

const DocTab = styled.div`
  width: 85px;
  padding: 0 3px;
  display: flex;
  align-items: center;
  gap: 3px;
  background: #f6f6f6;
  color: #222;
`;

const DocTabName = styled.span`
  flex: 1;
`;

const DocMenu = styled.div`
  width: 10px;
  display: flex;
  flex-direction: column;
  align-items: center;
  justify-content: center;
`;

const CanvasRow = styled.div`
  flex: 1;
  min-height: 0;
  display: flex;
`;

const Canvas = styled.div`
  flex: 1;
  position: relative;
  overflow: hidden;
  background: #fff;
`;

const Marker = styled.svg<{ $x: number; $y: number }>`
  position: absolute;
  left: ${(p) => p.$x}px;
  top: ${(p) => p.$y}px;
  width: 48px;
  height: 48px;
`;

const Pointer = styled.svg`
  position: absolute;
  left: 260px;
  top: 99px;
  width: 11px;
  height: 16px;
`;

const NavBar = styled.div`
  position: absolute;
  left: 980px;
  top: 1px;
  width: 24px;
  height: 78px;
  padding: 2px 0;
  display: flex;
  flex-direction: column;
  align-items: center;
  justify-content: space-between;
  background: #fff;
  border: 2px solid #cfcfcf;
  border-radius: 4px;
`;

const NavDot = styled.span`
  width: 5px;
  height: 5px;
  align-self: flex-end;
  margin-right: 1px;
  border-radius: 50%;
  background: #bbb;
`;

const NavCaret = styled.span`
  border: 2px solid transparent;
  border-bottom: 0;
  border-top-color: #555;
`;

const NavRule = styled.span`
  width: 16px;
  height: 1px;
  background: #ccc;
`;

const Logo = styled.div`
  position: absolute;
  left: 705px;
  top: 425px;
  width: 266px;
  height: 110px;
`;

const LogoText = styled.div`
  position: absolute;
  left: 0;
  bottom: -31px;
  font: 400 125px/140px 'Liberation Sans', sans-serif;
  color: #77777b;
  -webkit-text-stroke: 1.4px #77777b;
  letter-spacing: 0;
  transform: scaleX(0.66);
  transform-origin: left bottom;
  white-space: nowrap;
`;

const LogoAccent = styled.span`
  background: linear-gradient(#c4056f 25%, #8b0f78 70%, #4d2385 90%);
  -webkit-background-clip: text;
  background-clip: text;
  color: transparent;
  -webkit-text-stroke: 1.4px transparent;
`;

const LogoDark = styled.span`
  color: #5a5060;
  -webkit-text-stroke: 1.4px #5a5060;
`;

const Flame = styled.svg`
  position: absolute;
  left: 145px;
  top: 0;
  width: 50px;
  height: 45px;
`;

const CanvasScroll = styled.div`
  width: 11px;
  padding: 5px 0 1px;
  display: flex;
  flex-direction: column;
  align-items: center;
  background: #f0f0f0;
`;

const CanvasThumb = styled.div`
  width: 9px;
  height: 11px;
  margin: 249px 0 auto;
  background: #c8c8c8;
`;

const ViewBar = styled.div`
  height: 14px;
  flex: none;
  display: flex;
  align-items: center;
  background: #f0f0f0;
`;

const ScaleLabel = styled.span`
  width: 51px;
  padding-left: 17px;
  color: #333;
  white-space: nowrap;
`;

const ViewIcons = styled.div`
  width: 155px;
  display: flex;
  align-items: center;
`;

const HorizontalTrack = styled.div`
  flex: 1;
  padding-left: 385px;
`;

const HorizontalThumb = styled.div`
  width: 11px;
  height: 11px;
  background: #c8c8c8;
`;

const StatusBar = styled.div`
  height: 16px;
  flex: none;
  display: flex;
  align-items: center;
  background: #c6c6c6;
  border-bottom: 1px solid #3a3a3a;
`;

const StatusText = styled.div`
  width: 597px;
  flex: none;
  padding-left: 1px;
  color: #222;
  white-space: nowrap;
`;

const StatusSelect = styled.div<{ $w: number; $gap: number }>`
  width: ${(p) => p.$w}px;
  flex: none;
  height: 12px;
  margin-left: ${(p) => p.$gap}px;
  padding: 0 2px;
  display: flex;
  align-items: center;
  justify-content: space-between;
  background: #fff;
  & > svg {
    margin-left: auto;
  }
`;

const MutedText = styled.span`
  color: #888;
`;

const WorksetCount = styled.div`
  width: 46px;
  flex: none;
  padding-left: 4px;
  display: flex;
  align-items: center;
  color: #555;
`;

const FilterIcons = styled.div`
  margin-left: 146px;
  display: flex;
  align-items: center;
`;

const FilterCount = styled.span`
  color: #444;
`;
